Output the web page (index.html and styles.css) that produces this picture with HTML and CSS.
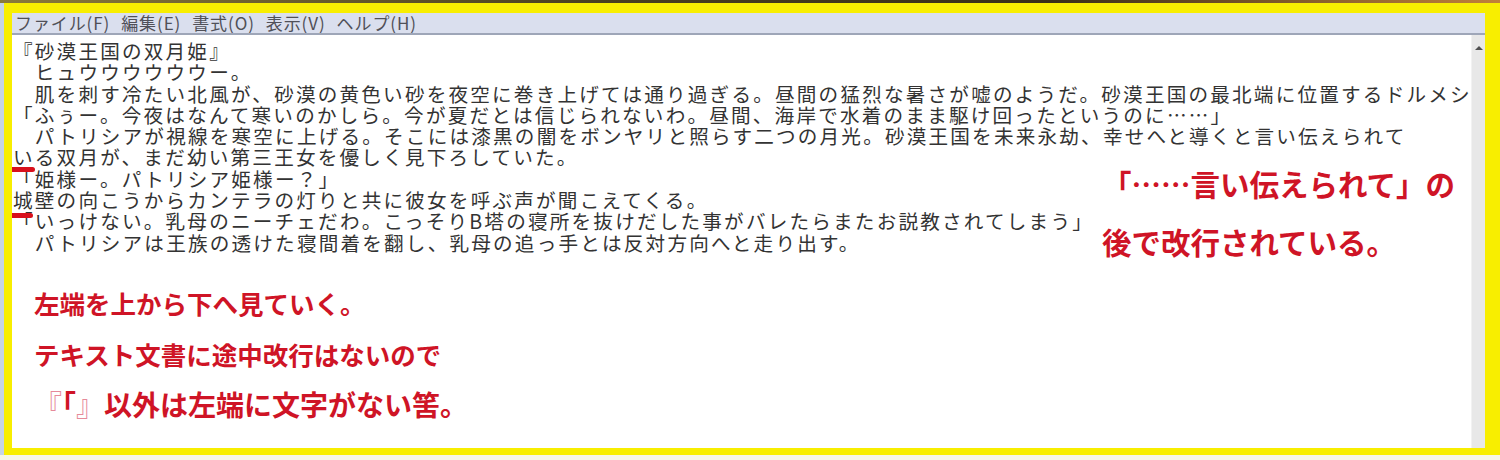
FILE: index.html
```html
<!DOCTYPE html>
<html lang="ja">
<head>
<meta charset="utf-8">
<title>砂漠王国の双月姫</title>
<link rel="stylesheet" href="styles.css">
</head>
<body>
<div class="screen">
  <div class="titlebar"></div>
  <div class="main">
    <div class="leftedge"></div>
    <div class="frame">
      <div class="menubar">
        <span class="menu-item">ファイル(F)</span>
        <span class="menu-item">編集(E)</span>
        <span class="menu-item">書式(O)</span>
        <span class="menu-item">表示(V)</span>
        <span class="menu-item">ヘルプ(H)</span>
      </div>
      <div class="editor">
        <div class="textarea">
          <div class="doc">
            <div class="line">『砂漠王国の双月姫』</div>
            <div class="line">　ヒュウウウウウウー。</div>
            <div class="line">　肌を刺す冷たい北風が、砂漠の黄色い砂を夜空に巻き上げては通り過ぎる。昼間の猛烈な暑さが嘘のようだ。砂漠王国の最北端に位置するドルメシア城</div>
            <div class="line">「ふぅー。今夜はなんて寒いのかしら。今が夏だとは信じられないわ。昼間、海岸で水着のまま駆け回ったというのに……」</div>
            <div class="line">　パトリシアが視線を寒空に上げる。そこには漆黒の闇をボンヤリと照らす二つの月光。砂漠王国を未来永劫、幸せへと導くと言い伝えられて</div>
            <div class="line">いる双月が、まだ幼い第三王女を優しく見下ろしていた。</div>
            <div class="line">「姫様ー。パトリシア姫様ー？」</div>
            <div class="line">城壁の向こうからカンテラの灯りと共に彼女を呼ぶ声が聞こえてくる。</div>
            <div class="line">「いっけない。乳母のニーチェだわ。こっそりB塔の寝所を抜けだした事がバレたらまたお説教されてしまう」</div>
            <div class="line">　パトリシアは王族の透けた寝間着を翻し、乳母の追っ手とは反対方向へと走り出す。</div>
          </div>
          <div class="notes">
            <div class="note">左端を上から下へ見ていく。</div>
            <div class="note">テキスト文書に途中改行はないので</div>
            <div class="note note-large"><span class="hollow">『</span>「<span class="hollow">』</span>以外は左端に文字がない筈。</div>
          </div>
          <div class="callout">
            <div class="note">「……言い伝えられて」の</div>
            <div class="note">後で改行されている。</div>
          </div>
          <div class="mark mark-1"></div>
          <div class="mark mark-2"></div>
        </div>
        <div class="scrollbar">
          <div class="arrow-up"></div>
        </div>
      </div>
    </div>
  </div>
  <div class="bottomstrip"></div>
</div>
</body>
</html>
```
FILE: styles.css
```css
html, body {
  margin: 0;
  padding: 0;
  background: #ffffff;
}

.screen {
  width: 1500px;
  height: 460px;
  display: flex;
  flex-direction: column;
  overflow: hidden;
}

.titlebar {
  height: 3px;
  flex: none;
  background: linear-gradient(to right, #8a7a3a 0%, #4a4020 40%, #3a3018 70%, #c0803a 100%);
}

.main {
  flex: 1;
  display: flex;
  min-height: 0;
}

.leftedge {
  width: 4px;
  flex: none;
  background: #c6d4e6;
}

.frame {
  flex: 1;
  display: flex;
  flex-direction: column;
  border-style: solid;
  border-color: #f8ee00;
  border-width: 10px 15px 7px 8px;
  background: #ffffff;
  min-width: 0;
}

.menubar {
  height: 20px;
  flex: none;
  display: flex;
  align-items: flex-start;
  background: #dadfee;
  border-bottom: 2px solid #9ea6b8;
  overflow: hidden;
  padding-left: 3px;
}

.menu-item {
  font-family: "Noto Sans CJK JP", sans-serif;
  font-size: 17px;
  line-height: 19px;
  margin-top: 0;
  color: #505058;
  margin-right: 11px;
  letter-spacing: 0.9px;
}

.editor {
  flex: 1;
  display: flex;
  min-height: 0;
}

.textarea {
  flex: 1;
  position: relative;
  overflow: hidden;
  padding: 5px 0 0 1px;
}

.doc {
  font-family: "Noto Sans CJK JP", sans-serif;
  font-size: 19.6px;
  letter-spacing: 2.2px;
  line-height: 21.3px;
  color: #333333;
  white-space: nowrap;
}

.line {
  height: 21.3px;
}

.notes {
  margin-top: 24px;
  padding-left: 21px;
}

.note {
  font-family: "Noto Sans CJK JP", sans-serif;
  font-weight: 700;
  font-size: 25.5px;
  line-height: 51px;
  color: #cf1426;
  white-space: nowrap;
}

.note-large {
  font-size: 28px;
}

.hollow {
  color: #e68a9a;
  font-weight: 400;
}

.callout {
  position: absolute;
  left: 1090px;
  top: 119px;
}

.callout .note {
  font-size: 29.5px;
  line-height: 58px;
}

.mark {
  position: absolute;
  left: 0;
  height: 5px;
  background: #d8101c;
  border-radius: 0 3px 3px 0;
}

.mark-1 {
  top: 132px;
  width: 23px;
}

.mark-2 {
  top: 178px;
  width: 21px;
}

.scrollbar {
  width: 14px;
  flex: none;
  background: #e8e8e8;
  border-left: 1px solid #f2f2f2;
  box-sizing: border-box;
  display: flex;
  justify-content: center;
  padding-top: 11px;
}

.arrow-up {
  width: 0;
  height: 0;
  border-left: 4px solid transparent;
  border-right: 4px solid transparent;
  border-bottom: 4px solid #505050;
}

.bottomstrip {
  height: 5px;
  flex: none;
  background: #f6f6e8;
}
```
